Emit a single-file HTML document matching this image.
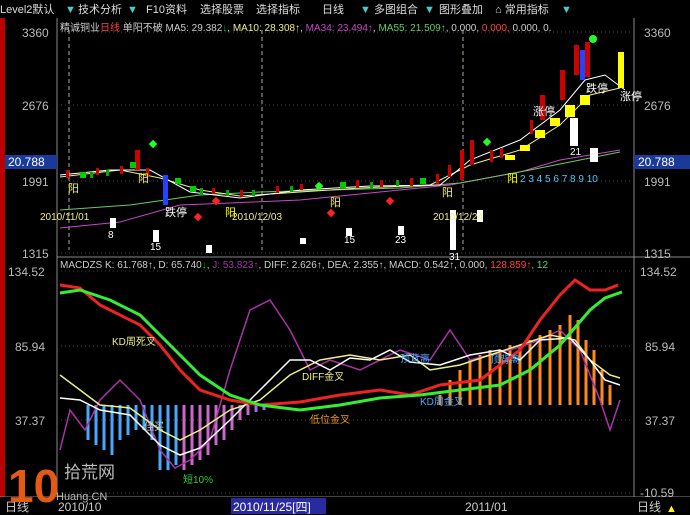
<!DOCTYPE html>
<html><head><meta charset="utf-8"><style>
body{margin:0;background:#000;width:690px;height:515px;overflow:hidden;font-family:"Liberation Sans","Noto Sans CJK SC",sans-serif}
svg{display:block}
text{font-family:"Liberation Sans","Noto Sans CJK SC",sans-serif}
</style></head><body>
<svg width="690" height="515" viewBox="0 0 690 515" font-size="12">
<rect width="690" height="515" fill="#000"/>
<g font-size="11" fill="#ddd">
<text x="0" y="13">Level2默认</text><text x="65" y="13" fill="#4cc">▼</text>
<text x="78" y="13">技术分析</text><text x="127" y="13" fill="#4cc">▼</text>
<text x="146" y="13">F10资料</text><text x="200" y="13">选择股票</text>
<text x="256" y="13">选择指标</text><text x="322" y="13">日线</text>
<text x="360" y="13" fill="#4cc">▼</text><text x="374" y="13">多图组合</text>
<text x="424" y="13" fill="#4cc">▼</text><text x="439" y="13">图形叠加</text>
<text x="495" y="13">⌂ 常用指标</text><text x="561" y="13" fill="#4cc">▼</text>
</g>
<rect x="0" y="18" width="5" height="497" fill="#b00"/>
<g stroke="#888" fill="none">
<line x1="57" y1="18" x2="57" y2="497"/><line x1="634" y1="18" x2="634" y2="515"/>
<line x1="57" y1="257" x2="690" y2="257"/><line x1="0" y1="497" x2="690" y2="497"/>
</g>
<g stroke="#444" stroke-dasharray="1 3">
<line x1="57" y1="32" x2="634" y2="32"/><line x1="57" y1="105" x2="634" y2="105"/>
<line x1="57" y1="181" x2="634" y2="181"/><line x1="57" y1="253" x2="634" y2="253"/>
<line x1="57" y1="271" x2="634" y2="271"/><line x1="57" y1="346" x2="634" y2="346"/>
<line x1="57" y1="420" x2="634" y2="420"/><line x1="57" y1="493" x2="634" y2="493"/>
</g>
<g stroke="#aa9" stroke-dasharray="4 3"><line x1="69" y1="30" x2="69" y2="250"/><line x1="262" y1="30" x2="262" y2="250"/><line x1="463" y1="30" x2="463" y2="250"/></g>
<g font-size="12" fill="#bbb">
<text x="22" y="37">3360</text><text x="22" y="110">2676</text><text x="22" y="186">1991</text><text x="22" y="258">1315</text>
<text x="644" y="37">3360</text><text x="644" y="110">2676</text><text x="644" y="186">1991</text><text x="644" y="258">1315</text>
<text x="8" y="276">134.52</text><text x="15" y="351">85.94</text><text x="15" y="425">37.37</text>
<text x="640" y="276">134.52</text><text x="645" y="351">85.94</text><text x="645" y="425">37.37</text><text x="640" y="497">-10.59</text>
</g>
<rect x="5" y="155" width="52" height="14" fill="#1a3a9a"/><text x="8" y="166" font-size="12" fill="#fff">20.788</text>
<rect x="634" y="155" width="56" height="14" fill="#1a3a9a"/><text x="638" y="166" font-size="12" fill="#fff">20.788</text>
<g font-size="10">
<text x="60" y="31" fill="#ccc">精诚铜业<tspan fill="#f44">日线</tspan> 单阳不破 MA5: 29.382<tspan fill="#0c0">↓</tspan>,<tspan fill="#ee8"> MA10: 28.308↑</tspan>,<tspan fill="#c4c"> MA34: 23.494↑</tspan>,<tspan fill="#6c6"> MA55: 21.509↑</tspan><tspan fill="#ccc">, 0.000,</tspan><tspan fill="#f44"> 0.000,</tspan><tspan fill="#ccc"> 0.000, 0.</tspan></text>
<text x="60" y="268" fill="#ccc">MACDZS K: 61.768↑, D: 65.740<tspan fill="#0c0">↓</tspan>,<tspan fill="#a3a"> J: 53.823↑</tspan>, DIFF: 2.626↑, DEA: 2.355↑, MACD: 0.542↑, 0.000, <tspan fill="#f44">128.859↑</tspan><tspan fill="#6c6">, 12</tspan></text>
</g>
<polyline fill="none" stroke="#c4c" points="60,228 120,222 180,205 230,203 300,200 380,192 450,185 520,172 560,160 620,150"/>
<polyline fill="none" stroke="#6c6" points="60,210 130,205 200,195 260,192 330,190 400,188 460,183 530,170 580,160 620,152"/>
<polyline fill="none" stroke="#ee8" points="60,177 120,170 160,178 200,190 240,196 300,192 360,188 430,185 470,165 520,150 560,125 590,95 620,88"/>
<polyline fill="none" stroke="#fff" points="60,175 110,170 150,170 190,192 240,198 300,190 370,186 440,185 470,160 520,140 560,110 585,80 605,75 625,90"/>
<!-- small candles -->
<g fill="#c00">
<rect x="66" y="170" width="3" height="8"/><rect x="96" y="168" width="3" height="7"/><rect x="120" y="166" width="3" height="8"/><rect x="146" y="168" width="3" height="9"/><rect x="212" y="188" width="3" height="6"/><rect x="240" y="190" width="3" height="7"/><rect x="276" y="186" width="3" height="7"/><rect x="300" y="184" width="3" height="6"/><rect x="356" y="180" width="3" height="8"/><rect x="380" y="180" width="3" height="7"/><rect x="410" y="178" width="3" height="8"/><rect x="436" y="174" width="3" height="10"/><rect x="448" y="165" width="3" height="12"/><rect x="490" y="150" width="3" height="12"/><rect x="500" y="148" width="3" height="10"/><rect x="530" y="120" width="3" height="14"/>
</g>
<g fill="#0a0">
<rect x="90" y="172" width="3" height="6"/><rect x="106" y="170" width="3" height="6"/><rect x="200" y="188" width="3" height="7"/><rect x="226" y="190" width="3" height="6"/><rect x="252" y="190" width="3" height="6"/><rect x="290" y="186" width="3" height="6"/><rect x="370" y="182" width="3" height="6"/><rect x="396" y="180" width="3" height="6"/>
</g>
<g fill="#c00">
<rect x="135" y="150" width="5" height="20"/><rect x="460" y="150" width="4" height="30"/><rect x="470" y="140" width="4" height="25"/>
<rect x="540" y="95" width="5" height="25"/><rect x="560" y="70" width="5" height="30"/><rect x="574" y="45" width="5" height="30"/><rect x="585" y="42" width="5" height="35"/>
</g>
<rect x="163" y="175" width="5" height="30" fill="#24f"/><rect x="580" y="50" width="5" height="30" fill="#24f"/>
<rect x="618" y="52" width="6" height="36" fill="#ff0"/>
<g fill="#ff0"><rect x="505" y="155" width="10" height="5"/><rect x="520" y="145" width="10" height="6"/><rect x="535" y="130" width="10" height="8"/><rect x="550" y="118" width="10" height="8"/><rect x="565" y="105" width="10" height="12"/><rect x="580" y="95" width="10" height="10"/></g>
<g fill="#0c0"><rect x="80" y="172" width="6" height="6"/><rect x="130" y="162" width="6" height="6"/><rect x="175" y="178" width="6" height="6"/><rect x="190" y="186" width="6" height="6"/><rect x="340" y="182" width="6" height="6"/><rect x="420" y="178" width="6" height="6"/></g>
<g fill="#fff"><rect x="110" y="218" width="6" height="10"/><rect x="153" y="230" width="6" height="12"/><rect x="206" y="245" width="6" height="8"/><rect x="300" y="238" width="6" height="6"/><rect x="346" y="228" width="6" height="8"/><rect x="398" y="226" width="6" height="9"/><rect x="450" y="210" width="6" height="40"/><rect x="477" y="210" width="6" height="12"/><rect x="570" y="118" width="8" height="28"/><rect x="590" y="148" width="8" height="14"/></g>
<g font-size="11" fill="#fff">
<text x="68" y="192" fill="#ff0">阳</text><text x="138" y="182" fill="#ff0">阳</text><text x="165" y="216">跌停</text><text x="225" y="216" fill="#ff0">阳</text>
<text x="330" y="206" fill="#ff0">阳</text><text x="442" y="196" fill="#ff0">阳</text><text x="507" y="182" fill="#ff0">阳</text>
<text x="586" y="92">跌停</text><text x="620" y="100">涨停</text><text x="533" y="115">涨停</text>
<text x="40" y="220" font-size="10" fill="#ee8">2010/11/01</text><text x="232" y="220" font-size="10" fill="#ee8">2010/12/03</text><text x="433" y="220" font-size="10" fill="#ee8">2010/12/24</text>
<text x="108" y="238" font-size="10">8</text><text x="150" y="250" font-size="10">15</text><text x="344" y="243" font-size="10">15</text><text x="395" y="243" font-size="10">23</text><text x="449" y="260" font-size="10">31</text>
<text x="520" y="182" font-size="10" fill="#4cf">2 3 4 5 6 7 8 9 10</text><text x="570" y="155" font-size="10">21</text>
</g>
<g fill="#f22"><rect x="195" y="214" width="6" height="6" transform="rotate(45 198 217)"/><rect x="328" y="210" width="6" height="6" transform="rotate(45 331 213)"/><rect x="387" y="198" width="6" height="6" transform="rotate(45 390 201)"/><rect x="213" y="198" width="6" height="6" transform="rotate(45 216 201)"/></g>
<g fill="#2f2"><rect x="150" y="141" width="6" height="6" transform="rotate(45 153 144)"/><rect x="316" y="183" width="6" height="6" transform="rotate(45 319 186)"/><rect x="484" y="139" width="6" height="6" transform="rotate(45 487 142)"/><circle cx="593" cy="39" r="4"/></g>
<g stroke-width="3">
<g stroke="#4af"><line x1="88" y1="405" x2="88" y2="440"/><line x1="96" y1="405" x2="96" y2="445"/><line x1="104" y1="405" x2="104" y2="450"/><line x1="112" y1="405" x2="112" y2="455"/><line x1="120" y1="405" x2="120" y2="440"/><line x1="128" y1="405" x2="128" y2="435"/><line x1="136" y1="405" x2="136" y2="430"/><line x1="144" y1="405" x2="144" y2="430"/><line x1="152" y1="405" x2="152" y2="440"/><line x1="160" y1="405" x2="160" y2="470"/><line x1="168" y1="405" x2="168" y2="470"/><line x1="176" y1="405" x2="176" y2="465"/></g>
<g stroke="#c6c"><line x1="184" y1="405" x2="184" y2="470"/><line x1="192" y1="405" x2="192" y2="465"/><line x1="200" y1="405" x2="200" y2="460"/><line x1="208" y1="405" x2="208" y2="455"/><line x1="216" y1="405" x2="216" y2="445"/><line x1="224" y1="405" x2="224" y2="440"/><line x1="232" y1="405" x2="232" y2="430"/><line x1="240" y1="405" x2="240" y2="420"/><line x1="248" y1="405" x2="248" y2="415"/></g>
<g stroke="#a6f"><line x1="256" y1="405" x2="256" y2="412"/><line x1="264" y1="405" x2="264" y2="410"/></g>
<g stroke="#f82"><line x1="440" y1="405" x2="440" y2="395"/><line x1="450" y1="405" x2="450" y2="380"/><line x1="460" y1="405" x2="460" y2="370"/><line x1="470" y1="405" x2="470" y2="360"/><line x1="480" y1="405" x2="480" y2="355"/><line x1="490" y1="405" x2="490" y2="350"/><line x1="500" y1="405" x2="500" y2="350"/><line x1="510" y1="405" x2="510" y2="345"/><line x1="520" y1="405" x2="520" y2="345"/><line x1="530" y1="405" x2="530" y2="340"/><line x1="540" y1="405" x2="540" y2="335"/><line x1="550" y1="405" x2="550" y2="330"/><line x1="560" y1="405" x2="560" y2="325"/><line x1="570" y1="405" x2="570" y2="315"/><line x1="578" y1="405" x2="578" y2="320"/><line x1="586" y1="405" x2="586" y2="340"/><line x1="594" y1="405" x2="594" y2="350"/><line x1="602" y1="405" x2="602" y2="370"/><line x1="610" y1="405" x2="610" y2="385"/></g>
</g>
<polyline fill="none" stroke="#a3a" stroke-width="1.5" points="60,450 70,410 85,430 100,400 120,380 140,400 160,450 175,468 190,460 210,440 230,370 250,310 270,300 290,330 310,370 330,360 360,370 400,350 430,360 450,330 470,360 490,355 510,350 540,340 560,330 580,350 600,400 610,430 620,400"/>
<polyline fill="none" stroke="#ee8" stroke-width="1.5" points="60,375 80,390 100,405 130,408 160,430 180,440 200,430 230,410 260,400 290,375 320,360 350,355 380,360 410,355 430,370 460,365 490,355 520,345 550,335 575,340 590,360 610,375 620,378"/>
<polyline fill="none" stroke="#fff" stroke-width="1.5" points="60,398 80,400 100,410 130,415 160,445 180,455 200,448 230,420 260,390 290,360 310,360 330,370 350,358 370,360 390,350 410,362 440,365 470,355 500,350 520,360 540,340 570,338 590,360 605,380 620,385"/>
<polyline fill="none" stroke="#e22" stroke-width="3" points="60,285 80,288 100,305 140,325 160,345 180,370 200,390 230,400 260,405 300,402 340,395 380,390 410,395 440,385 480,380 520,350 540,320 560,295 575,280 590,290 605,290 618,285"/>
<polyline fill="none" stroke="#3e3" stroke-width="3" points="60,293 80,290 110,300 140,315 170,345 200,375 230,395 260,405 300,410 340,405 380,398 420,395 460,390 500,385 530,370 560,345 590,310 605,298 622,292"/>
<g font-size="10">
<text x="112" y="345" fill="#ee8">KD周死叉</text><text x="400" y="362" fill="#4af">顶背离</text><text x="490" y="363" fill="#4af">顶背离</text>
<text x="302" y="380" fill="#ee8">DIFF金叉</text><text x="310" y="423" fill="#e92">低位金叉</text><text x="420" y="405" fill="#4af">KD周金叉</text>
<text x="144" y="430" fill="#ccc">佳买</text><text x="183" y="483" fill="#3c3">短10%</text>
</g>
<rect x="0" y="497" width="690" height="18" fill="#000"/>
<rect x="231" y="498" width="95" height="16" fill="#2a2aa0"/>
<g font-size="12" fill="#ccc"><text x="58" y="511">2010/10</text><text x="233" y="511" fill="#fff">2010/11/25[四]</text><text x="465" y="511">2011/01</text>
<text x="5" y="511">日线</text><text x="637" y="511">日线</text></g>
<text x="666" y="512" font-size="11" fill="#ff0">▲</text>
<text x="8" y="502" font-size="46" font-weight="bold" fill="#e55a12">10</text>
<text x="64" y="478" font-size="17" fill="#bbb">拾荒网</text>
<text x="56" y="500" font-size="11" fill="#bbb">Huang.CN</text>
</svg>
</body></html>
